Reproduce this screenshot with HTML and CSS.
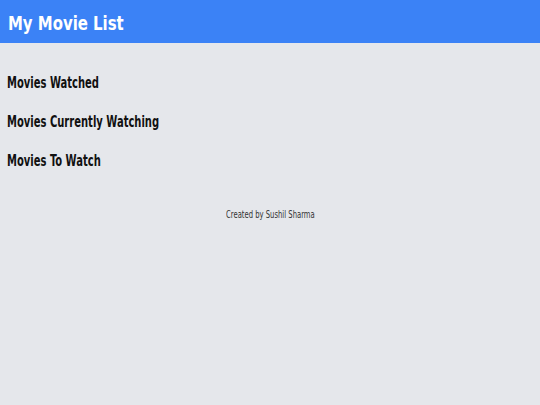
FILE: index.html
```html
<!DOCTYPE html>
<html>
  <head>
    <meta name="viewport" content="width=device-width, initial-scale=1.0">
    <title>My Movie List</title>
    <link rel="stylesheet" href="styles.css">
  </head>
  <body>
    <header>
      <h1>My Movie List</h1>
    </header>
    <main>
      <section class="list">
        <h2>Movies Watched</h2>
      </section>
      <section class="list">
        <h2>Movies Currently Watching</h2>
      </section>
      <section class="list">
        <h2>Movies To Watch</h2>
      </section>
    </main>
    <footer>
      <p>Created by Sushil Sharma</p>
    </footer>
  </body>
</html>
```
FILE: styles.css
```css
body {
  font-family: "DejaVu Sans Condensed", "DejaVu Sans", sans-serif;
  margin: 0;
  padding: 0;
  background-color: #e5e7eb;
  min-height: 405px;
}
header {
  background-color: #3b82f6;
  color: white;
  height: 43px;
  box-sizing: border-box;
  padding: 3px 8px 0;
}
h1 {
  margin: 0;
  font-size: 20px;
  line-height: 40px;
  font-weight: bold;
  transform: scaleX(0.83);
  transform-origin: left center;
}
main {
  display: flex;
  flex-direction: column;
  gap: 20px;
  padding: 31px 7px 0;
}
h2 {
  margin: 0;
  font-size: 15px;
  font-weight: bold;
  line-height: 19px;
  color: #111;
  transform: scaleX(0.74);
  transform-origin: left center;
}
footer {
  text-align: center;
  margin-top: 32px;
}
footer p {
  display: inline-block;
  margin: 0;
  font-size: 10px;
  line-height: 12px;
  color: #333;
  transform: scaleX(0.76);
}
```
